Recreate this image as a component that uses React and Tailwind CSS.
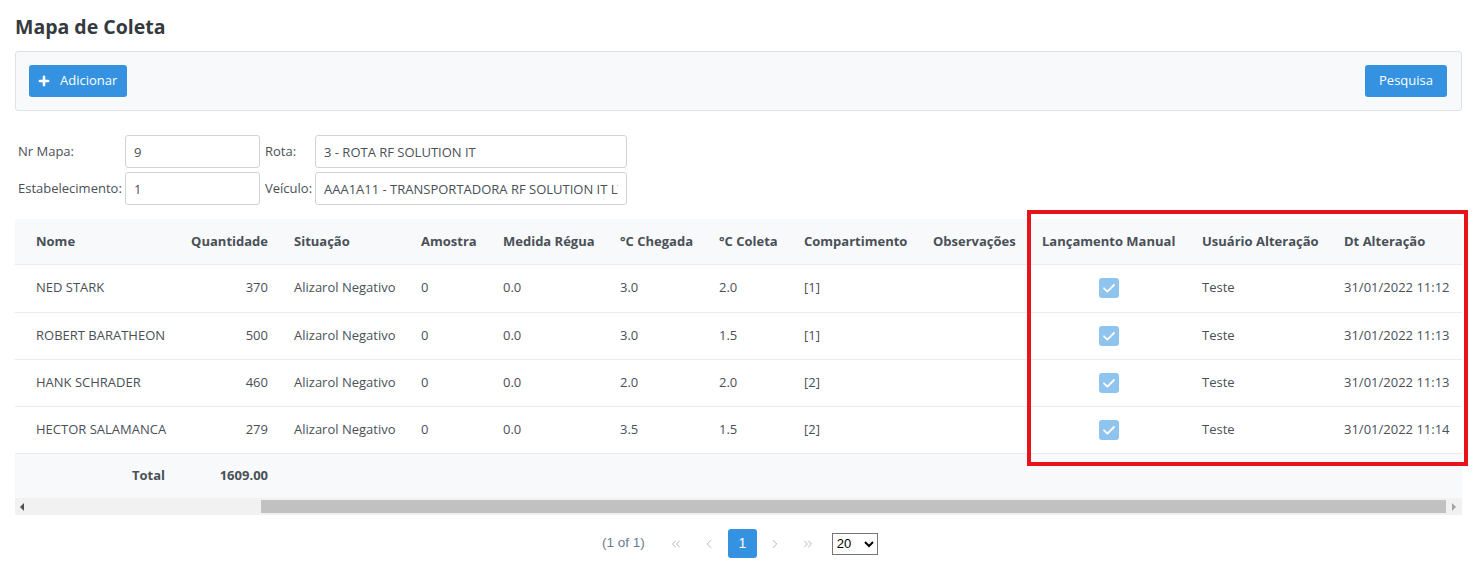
import { Plus, ChevronsLeft, ChevronLeft, ChevronRight, ChevronsRight } from "lucide-react";

const rows = [
  { nome: "NED STARK", qtd: "370", sit: "Alizarol Negativo", amostra: "0", regua: "0.0", chegada: "3.0", coleta: "2.0", comp: "[1]", user: "Teste", dt: "31/01/2022 11:12" },
  { nome: "ROBERT BARATHEON", qtd: "500", sit: "Alizarol Negativo", amostra: "0", regua: "0.0", chegada: "3.0", coleta: "1.5", comp: "[1]", user: "Teste", dt: "31/01/2022 11:13" },
  { nome: "HANK SCHRADER", qtd: "460", sit: "Alizarol Negativo", amostra: "0", regua: "0.0", chegada: "2.0", coleta: "2.0", comp: "[2]", user: "Teste", dt: "31/01/2022 11:13" },
  { nome: "HECTOR SALAMANCA", qtd: "279", sit: "Alizarol Negativo", amostra: "0", regua: "0.0", chegada: "3.5", coleta: "1.5", comp: "[2]", user: "Teste", dt: "31/01/2022 11:14" },
];

function Check() {
  return (
    <span className="inline-flex w-[20px] h-[20px] rounded-[3px] bg-[#8fc4ef] items-center justify-center align-middle">
      <svg width="16" height="16" viewBox="0 0 16 16" fill="none">
        <path d="M3 8.3 L6.4 11.6 L13 5" stroke="white" strokeWidth="1.8" strokeLinecap="round" strokeLinejoin="round" />
      </svg>
    </span>
  );
}

function Field({ label, value, labelW, inputW }) {
  return (
    <div className="flex items-center">
      <span className={labelW}>{label}</span>
      <input
        readOnly
        value={value}
        className={`${inputW} h-[33px] px-[8px] border border-[#ced4da] rounded-[3px] text-[13px] text-[#495057] outline-none bg-white`}
      />
    </div>
  );
}

const th = "h-[45px] px-[13px] text-[13px] font-bold text-[#495057] text-left whitespace-nowrap";
const td = "h-[47px] px-[13px] text-[13px] text-[#495057] whitespace-nowrap";

const App = () => {
  return (
    <div className="relative w-[1479px] h-[571px] bg-white pl-[15px] pr-[17px] pt-[12px] font-['Open_Sans',sans-serif] text-[#495057] overflow-hidden">
      <h1 className="text-[19.5px] leading-[30px] font-bold text-[#343a40]">Mapa de Coleta</h1>

      <div className="mt-[9px] h-[60px] flex items-center justify-between pl-[13px] pr-[14px] bg-[#f8f9fa] border border-[#dee2e6] rounded-[3px]">
        <button className="h-[32px] pl-[8px] pr-[10px] flex items-center gap-[9px] bg-[#3592e1] text-white text-[13px] rounded-[3px]">
          <Plus size={14} strokeWidth={4.5} />
          Adicionar
        </button>
        <button className="h-[32px] px-[14px] bg-[#3592e1] text-white text-[13px] rounded-[3px]">Pesquisa</button>
      </div>

      <div className="mt-[24px] flex flex-col gap-[4px] text-[13px] pl-[3px]">
        <div className="flex items-center gap-[5px]">
          <Field label="Nr Mapa:" value="9" labelW="w-[107px]" inputW="w-[135px]" />
          <Field label="Rota:" value="3 - ROTA RF SOLUTION IT" labelW="w-[50px]" inputW="w-[312px]" />
        </div>
        <div className="flex items-center gap-[5px]">
          <Field label="Estabelecimento:" value="1" labelW="w-[107px]" inputW="w-[135px]" />
          <Field label="Veículo:" value="AAA1A11 - TRANSPORTADORA RF SOLUTION IT LTDA" labelW="w-[50px]" inputW="w-[312px]" />
        </div>
      </div>

      <div className="mt-[14px] w-[1447px] overflow-hidden">
        <table className="table-fixed border-collapse w-[1448px]">
          <colgroup>
            <col className="w-[160px]" />
            <col className="w-[106px]" />
            <col className="w-[127px]" />
            <col className="w-[82px]" />
            <col className="w-[117px]" />
            <col className="w-[99px]" />
            <col className="w-[85px]" />
            <col className="w-[129px]" />
            <col className="w-[109px]" />
            <col className="w-[160px]" />
            <col className="w-[142px]" />
            <col className="w-[132px]" />
          </colgroup>
          <thead>
            <tr className="bg-[#f8f9fa] border-b border-[#e9ecef]">
              <th className={`${th} pl-[21px]`}>Nome</th>
              <th className={`${th} text-right`}>Quantidade</th>
              <th className={th}>Situação</th>
              <th className={th}>Amostra</th>
              <th className={th}>Medida Régua</th>
              <th className={th}>°C Chegada</th>
              <th className={th}>°C Coleta</th>
              <th className={th}>Compartimento</th>
              <th className={th}>Observações</th>
              <th className={th}>Lançamento Manual</th>
              <th className={th}>Usuário Alteração</th>
              <th className={th}>Dt Alteração</th>
            </tr>
          </thead>
          <tbody>
            {rows.map((r, i) => (
              <tr key={r.nome} className="border-b border-[#e9ecef]">
                <td className={`${td} ${i === 0 ? "h-[48px]" : ""} pl-[21px]`}>{r.nome}</td>
                <td className={`${td} text-right`}>{r.qtd}</td>
                <td className={td}>{r.sit}</td>
                <td className={td}>{r.amostra}</td>
                <td className={td}>{r.regua}</td>
                <td className={td}>{r.chegada}</td>
                <td className={td}>{r.coleta}</td>
                <td className={td}>{r.comp}</td>
                <td className={td}></td>
                <td className={`${td} text-center`}><Check /></td>
                <td className={td}>{r.user}</td>
                <td className={td}>{r.dt}</td>
              </tr>
            ))}
          </tbody>
          <tfoot>
            <tr className="bg-[#f8f9fa]">
              <td className="h-[45px] pr-[10px] text-right text-[13px] font-bold text-[#495057]">Total</td>
              <td className="h-[45px] px-[13px] text-right text-[13px] font-bold text-[#495057]">1609.00</td>
              <td colSpan={10}></td>
            </tr>
          </tfoot>
        </table>
        {/* scrollbar */}
        <div className="h-[17px] bg-[#f1f1f1] flex items-center">
          <div className="w-[14px] flex justify-center">
            <span className="w-0 h-0 border-y-[4px] border-y-transparent border-r-[4px] border-r-[#505050]" />
          </div>
          <div className="flex-1 h-full flex items-center">
            <div className="ml-[232px] flex-1 h-[13px] bg-[#c1c1c1]" />
          </div>
          <div className="w-[16px] flex justify-center">
            <span className="w-0 h-0 border-y-[4px] border-y-transparent border-l-[4px] border-l-[#a3a3a3]" />
          </div>
        </div>
      </div>

      <div className="mt-[14px] flex items-center pl-[587px] font-['Liberation_Sans',sans-serif]">
        <span className="text-[13.5px] text-[#6c7a90] mr-[15px]">(1 of 1)</span>
        <span className="w-[33px] flex justify-center text-[#a3abb4]"><ChevronsLeft size={14} strokeWidth={1.5} /></span>
        <span className="w-[33px] flex justify-center text-[#a3abb4]"><ChevronLeft size={14} strokeWidth={1.5} /></span>
        <span className="w-[29px] h-[29px] mx-[2px] rounded-[3px] bg-[#3592e1] text-white text-[14px] flex items-center justify-center">1</span>
        <span className="w-[33px] flex justify-center text-[#a3abb4]"><ChevronRight size={14} strokeWidth={1.5} /></span>
        <span className="w-[33px] flex justify-center text-[#a3abb4]"><ChevronsRight size={14} strokeWidth={1.5} /></span>
        <select defaultValue="20" className="ml-[7px] w-[46px] h-[22px] border border-[#767676] text-[13px] text-black bg-white">
          <option>20</option>
        </select>
      </div>

      {/* annotation */}
      <div className="absolute left-[1027px] top-[210px] w-[441px] h-[256px] border-[4px] border-[#e8141c] pointer-events-none" />
    </div>
  );
};

export default App;
